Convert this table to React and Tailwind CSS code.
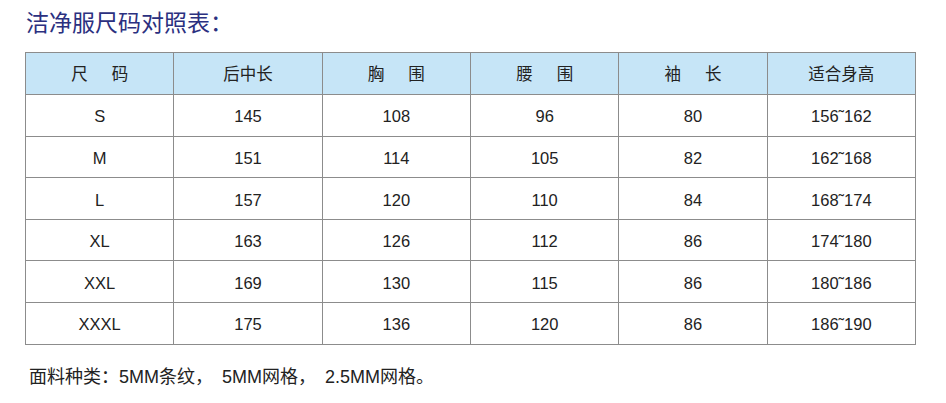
const headers = [
  ["尺", "码"],
  ["后中长"],
  ["胸", "围"],
  ["腰", "围"],
  ["袖", "长"],
  ["适合身高"],
];

const rows = [
  ["S", "145", "108", "96", "80", "156˜162"],
  ["M", "151", "114", "105", "82", "162˜168"],
  ["L", "157", "120", "110", "84", "168˜174"],
  ["XL", "163", "126", "112", "86", "174˜180"],
  ["XXL", "169", "130", "115", "86", "180˜186"],
  ["XXXL", "175", "136", "120", "86", "186˜190"],
];

const font = { fontFamily: '"Liberation Sans", "Noto Sans CJK SC", sans-serif' };

export default function App() {
  return (
    <div className="w-[946px] h-[403px] bg-white pl-[25px] pt-[8px]" style={font}>
      {/* title */}
      <h1 className="text-[23px] leading-[30px] text-[#2b3080] pl-[1px]">洁净服尺码对照表：</h1>

      <table className="mt-[14px] w-[891px] border-collapse table-fixed text-[16.5px] text-[#222]">
        <thead>
          <tr className="bg-[#c6e5f7] h-[42px]">
            {headers.map((h, i) => (
              <th key={i} className="border-[1.5px] border-[#8c8c8c] font-normal pt-[2px]">
                <span className="inline-flex justify-center gap-[24px]">
                  {h.map((c, j) => (
                    <span key={j}>{c}</span>
                  ))}
                </span>
              </th>
            ))}
          </tr>
        </thead>
        <tbody>
          {rows.map((r, i) => (
            <tr key={i} className="h-[41.6px]">
              {r.map((c, j) => (
                <td key={j} className="border-[1.5px] border-[#8c8c8c] text-center pt-[3px]">
                  {c}
                </td>
              ))}
            </tr>
          ))}
        </tbody>
      </table>

      {/* fabric note */}
      <p className="mt-[19px] pl-[4px] text-[18px] text-[#222]">
        面料种类：5MM条纹，　5MM网格，　2.5MM网格。
      </p>
    </div>
  );
}
